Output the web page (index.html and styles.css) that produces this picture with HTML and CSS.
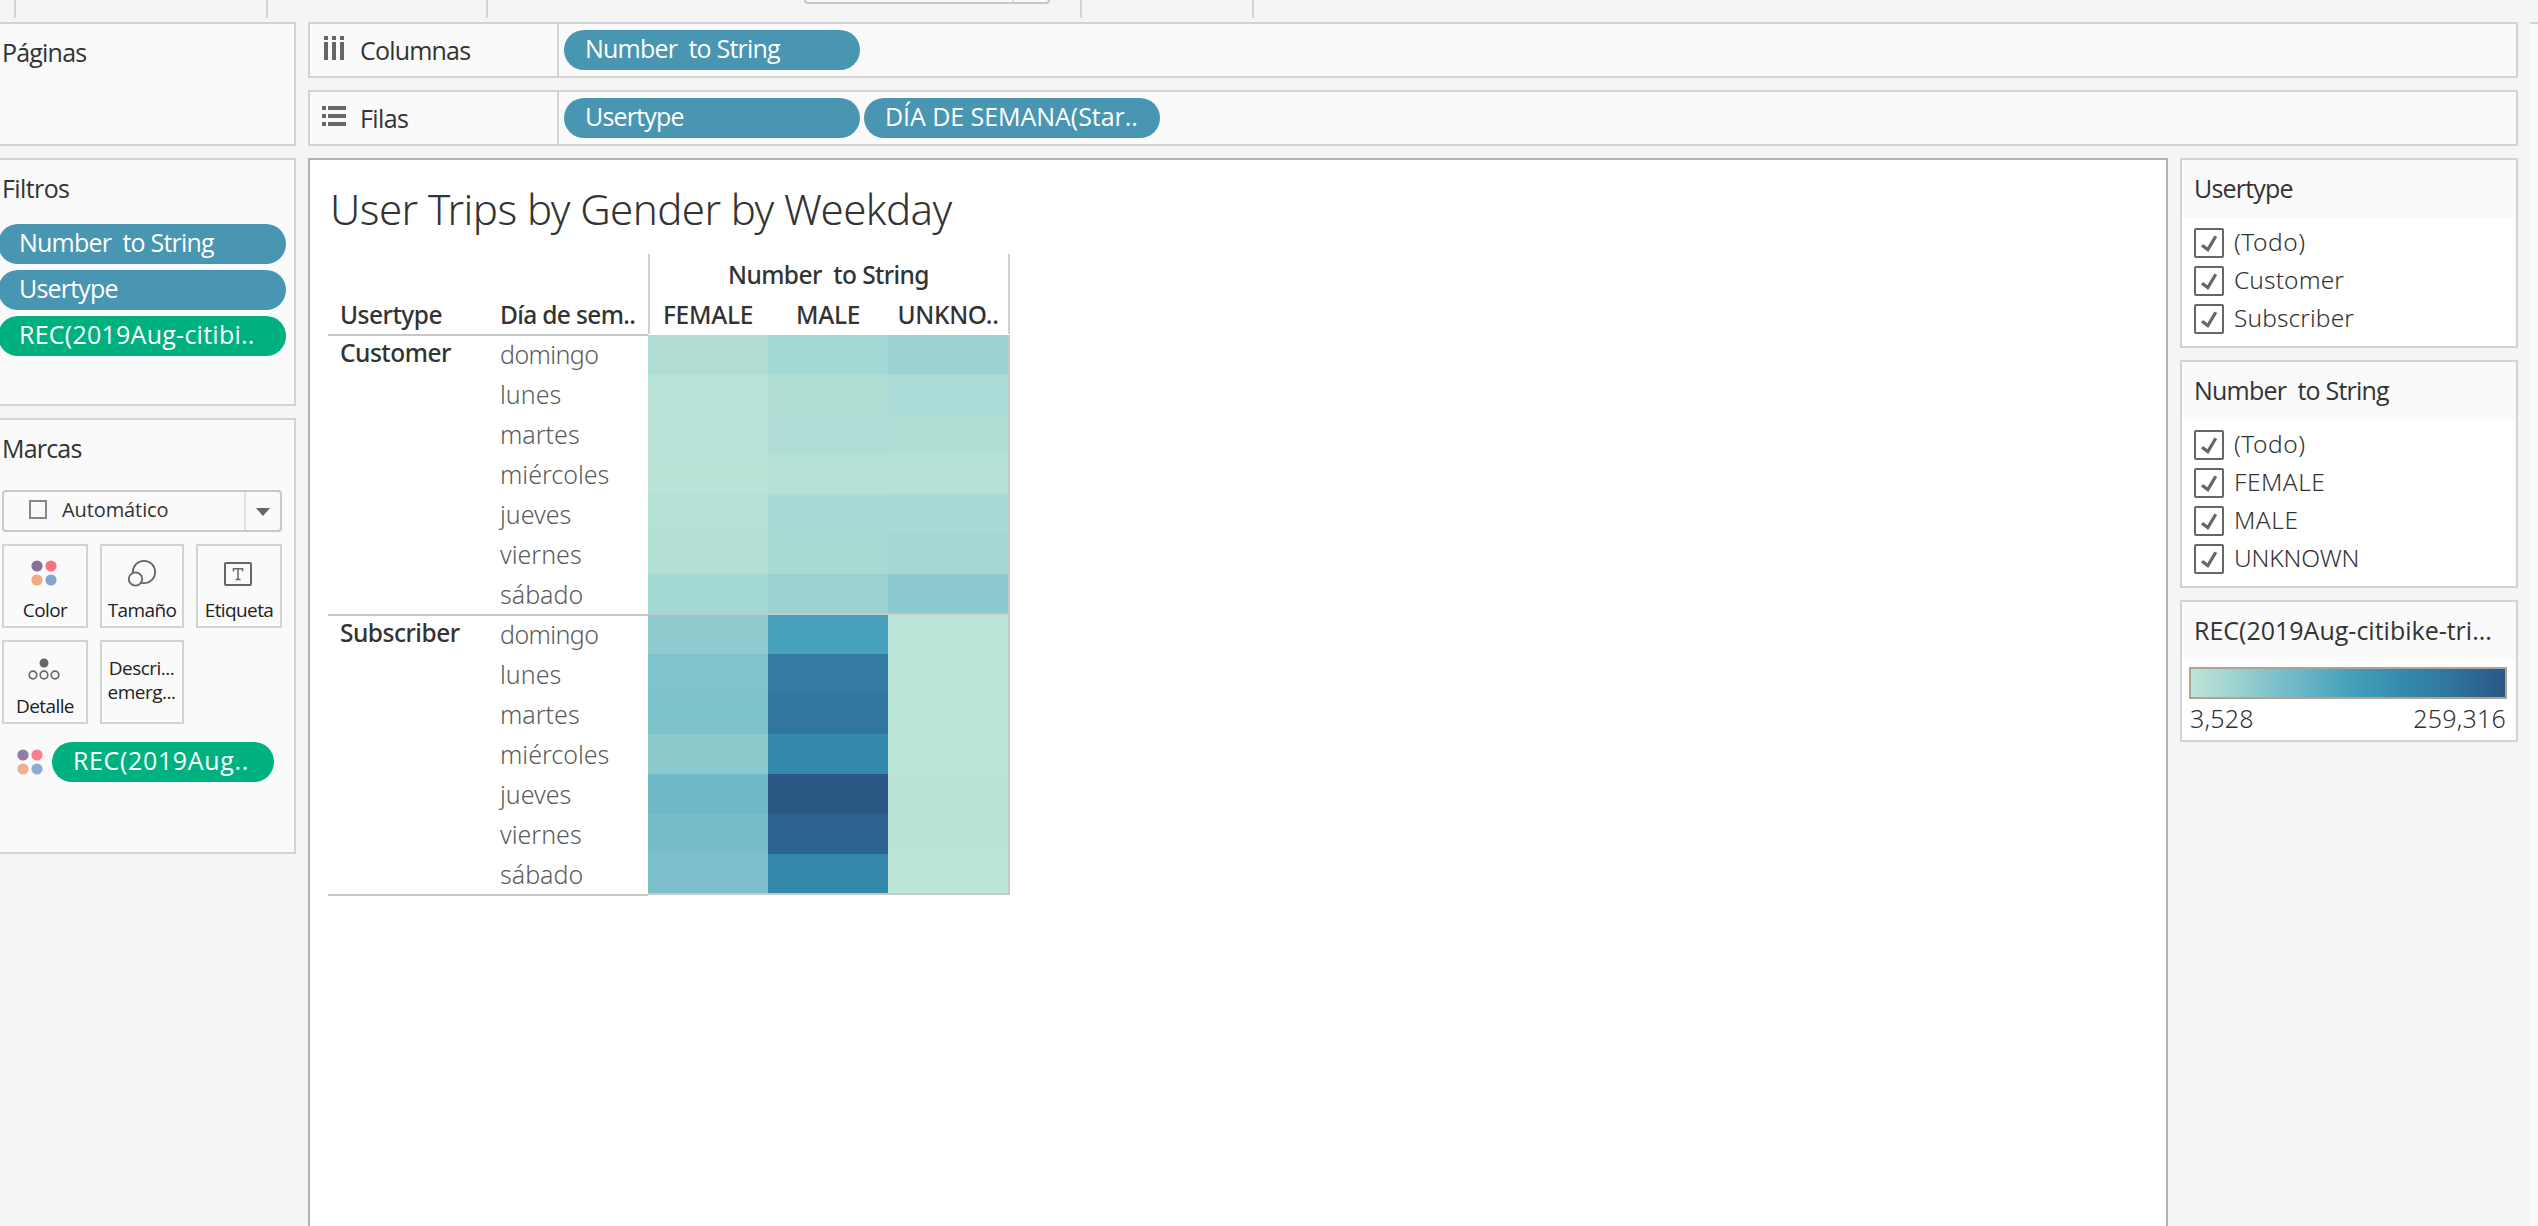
FILE: index.html
```html
<!DOCTYPE html>
<html lang="es">
<head>
<meta charset="utf-8">
<title>User Trips by Gender by Weekday</title>
<link rel="stylesheet" href="styles.css">
</head>
<body>
<svg class="defs" width="0" height="0">
  <symbol id="dots" viewBox="0 0 26 26">
    <circle cx="6" cy="6" r="5.6" fill="#876f99"/><circle cx="20" cy="6" r="5.6" fill="#fa7282"/>
    <circle cx="6" cy="20" r="5.6" fill="#f3a77d"/><circle cx="20" cy="20" r="5.6" fill="#82a5cc"/>
  </symbol>
  <symbol id="check" viewBox="0 0 30 30">
    <rect x="1" y="1" width="28" height="28" rx="1" fill="#fff" stroke="#666" stroke-width="2"/>
    <path d="M8 17.2L13.8 21.6L21.8 8.2" fill="none" stroke="#666" stroke-width="3.2"/>
  </symbol>
</svg>

<div class="toolbar">
  <i class="sep s1"></i><i class="sep s2"></i><i class="sep s3"></i>
  <div class="fit"><i></i></div>
  <i class="sep s4"></i><i class="sep s5"></i>
</div>

<div class="workspace">
  <aside class="side">
    <section class="panel pages"><h2 class="t7">Páginas</h2></section>
    <section class="panel filters">
      <h2 class="t5">Filtros</h2>
      <div class="pills">
        <div class="pill t8">Number&nbsp; to String</div>
        <div class="pill t8">Usertype</div>
        <div class="pill green w2">REC(2019Aug-citibi..</div>
      </div>
    </section>
    <section class="panel marks">
      <h2 class="t7">Marcas</h2>
      <div class="select"><i class="square"></i><span>Automático</span>
        <b><svg width="14" height="8"><path d="M0 0H14L7 8Z" fill="#666"/></svg></b></div>
      <div class="buttons">
        <div class="btn"><svg class="ic-color" width="26" height="26"><use href="#dots"/></svg><span>Color</span></div>
        <div class="btn"><svg class="ic-size" width="30" height="30" fill="none" stroke="#666" stroke-width="1.8"><circle cx="17" cy="13" r="11.2"/><circle cx="8.5" cy="20" r="6.7" fill="#fafafa"/></svg><span>Tamaño</span></div>
        <div class="btn"><svg class="ic-label" width="28" height="24"><rect x="1" y="1" width="26" height="22" rx="1" fill="none" stroke="#666" stroke-width="2"/><path d="M9.5 9.5V6.8H18.5V9.5M14 6.8V17.3M11.5 17.5H16.5" fill="none" stroke="#666" stroke-width="1.5"/></svg><span>Etiqueta</span></div>
        <div class="btn"><svg class="ic-detail" width="32" height="22" fill="none" stroke="#666" stroke-width="1.7"><circle cx="16" cy="5" r="4.5" fill="#666" stroke="none"/><circle cx="5" cy="17" r="3.8"/><circle cx="16" cy="17" r="3.8"/><circle cx="27" cy="17" r="3.8"/></svg><span>Detalle</span></div>
        <div class="btn tip"><span>Descri...</span><span>emerg...</span></div>
      </div>
      <div class="encoding"><svg width="26" height="26"><use href="#dots"/></svg><div class="pill green w3">REC(2019Aug..</div></div>
    </section>
  </aside>

  <main class="center">
    <div class="shelf">
      <div class="label"><svg width="24" height="24" fill="#666"><path d="M2 0h4v4H2zM10 0h4v4h-4zM18 0h4v4h-4zM2 6h4v18H2zM10 6h4v18h-4zM18 6h4v18h-4z"/></svg><span class="t8">Columnas</span></div>
      <div class="pill t8">Number&nbsp; to String</div>
    </div>
    <div class="shelf rows">
      <div class="label"><svg width="24" height="20" fill="#666"><path d="M0 0h4v4H0zM0 8h4v4H0zM0 16h4v4H0zM6 0h18v4H6zM6 8h18v4H6zM6 16h18v4H6z"/></svg><span class="t5">Filas</span></div>
      <div class="pill t8">Usertype</div>
      <div class="pill w1">DÍA DE SEMANA(Star..</div>
    </div>
    <div class="view">
      <section class="sheet">
        <h1>User Trips by Gender by Weekday</h1>
        <div class="table">
          <div class="corner"><b>Usertype</b><b>Día de sem..</b></div>
          <div class="head">
            <b class="field">Number&nbsp; to String</b>
            <div class="cols"><b>FEMALE</b><b>MALE</b><b>UNKNO..</b></div>
          </div>
          <div class="group"><b>Customer</b>
            <ul><li class="dg">domingo</li><li>lunes</li><li>martes</li><li>miércoles</li><li>jueves</li><li>viernes</li><li>sábado</li></ul></div>
          <div class="cells">
            <i style="background:#b0dcd3"></i><i style="background:#a5d9d5"></i><i style="background:#9bd3d2"></i>
            <i style="background:#b8e2d7"></i><i style="background:#aeddd4"></i><i style="background:#abdcd7"></i>
            <i style="background:#b9e3d8"></i><i style="background:#afddd5"></i><i style="background:#b0ddd4"></i>
            <i style="background:#bae4d8"></i><i style="background:#b5e0d6"></i><i style="background:#b6e1d7"></i>
            <i style="background:#b5e0d5"></i><i style="background:#a9dbd6"></i><i style="background:#a8dad6"></i>
            <i style="background:#b4dfd5"></i><i style="background:#a9dbd5"></i><i style="background:#a5d8d4"></i>
            <i style="background:#a5d9d4"></i><i style="background:#9bd2d0"></i><i style="background:#8ccad0"></i>
          </div>
          <div class="group"><b>Subscriber</b>
            <ul><li class="dg">domingo</li><li>lunes</li><li>martes</li><li>miércoles</li><li>jueves</li><li>viernes</li><li>sábado</li></ul></div>
          <div class="cells">
            <i style="background:#8fcacf"></i><i style="background:#46a2bc"></i><i style="background:#bce5d9"></i>
            <i style="background:#81c3cd"></i><i style="background:#337ba1"></i><i style="background:#bbe5d9"></i>
            <i style="background:#7ec2cc"></i><i style="background:#31769e"></i><i style="background:#bbe5d8"></i>
            <i style="background:#8ccacd"></i><i style="background:#348aac"></i><i style="background:#bce5d9"></i>
            <i style="background:#6eb8c8"></i><i style="background:#2b5884"></i><i style="background:#b9e3d7"></i>
            <i style="background:#77bcc8"></i><i style="background:#2d648f"></i><i style="background:#bae4d8"></i>
            <i style="background:#7dc0cb"></i><i style="background:#3489ab"></i><i style="background:#bbe5d8"></i>
          </div>
        </div>
      </section>
      <aside class="cards">
        <section class="card">
          <h2 class="t8">Usertype</h2>
          <div class="opts">
            <label><svg><use href="#check"/></svg><span class="all">(Todo)</span></label>
            <label><svg><use href="#check"/></svg><span>Customer</span></label>
            <label><svg><use href="#check"/></svg><span>Subscriber</span></label>
          </div>
        </section>
        <section class="card">
          <h2 class="t8">Number&nbsp; to String</h2>
          <div class="opts">
            <label><svg><use href="#check"/></svg><span class="all">(Todo)</span></label>
            <label><svg><use href="#check"/></svg><span class="all">FEMALE</span></label>
            <label><svg><use href="#check"/></svg><span class="all">MALE</span></label>
            <label><svg><use href="#check"/></svg><span class="caps">UNKNOWN</span></label>
          </div>
        </section>
        <section class="card">
          <h2>REC(2019Aug-citibike-tri...</h2>
          <div class="legend"><div class="ramp"></div><div class="range"><span>3,528</span><span>259,316</span></div></div>
        </section>
      </aside>
    </div>
  </main>
  <div class="edge"></div>
</div>
</body>
</html>
```

FILE: styles.css
```css
* { box-sizing: border-box; margin: 0; padding: 0; }
body { width: 2538px; height: 1226px; overflow: hidden; background: #f5f5f5; color: #333; font: 25px "Open Sans", sans-serif; display: flex; flex-direction: column; white-space: nowrap; }
h1, h2 { font-weight: 400; font-size: 25px; }
svg { display: block; flex: none; }
.defs { position: absolute; }

.t5 { letter-spacing: -.6px; }
.t7 { letter-spacing: -.8px; }
.t8 { letter-spacing: -.8px; }
.w1 { letter-spacing: -.05px; }
.w2 { letter-spacing: .25px; }
.w3 { letter-spacing: .65px; }

.toolbar { height: 22px; display: flex; flex: none; align-items: flex-start; }
.sep { width: 2px; height: 18px; background: #d3d3d3; }
.s1 { margin-left: 14px; }
.s2 { margin-left: 250px; }
.s3 { margin-left: 218px; }
.fit { margin-left: 316px; width: 246px; height: 4px; border: 2px solid #c8c8c8; border-top: 0; border-radius: 0 0 4px 4px; background: #fafafa; display: flex; justify-content: flex-end; }
.fit i { width: 2px; height: 2px; margin-right: 34px; background: #e0e0e0; }
.s4 { margin-left: 30px; }
.s5 { margin-left: 170px; }

.workspace { flex: 1; display: flex; gap: 12px; min-height: 0; }
.side { width: 296px; display: flex; flex-direction: column; gap: 12px; }
.panel { border: 2px solid #d3d3d3; border-left: 0; background: #fafafa; padding-top: 8px; }
.panel h2 { line-height: 40px; padding-left: 2px; }
.pages { height: 124px; }
.filters { height: 248px; }
.marks { height: 436px; }
.pill { width: 296px; height: 40px; line-height: 37px; border-radius: 20px; background: #4996b2; color: #fff; padding-left: 21px; overflow: hidden; }
.green { background: #00b180; }
.pills { margin: 16px 0 0 -2px; display: flex; flex-direction: column; gap: 6px; }
.pills .pill { width: 288px; }

.select { margin: 22px 0 0 2px; width: 280px; height: 42px; border: 2px solid #c8c8c8; border-radius: 4px; display: flex; align-items: center; font-size: 20px; letter-spacing: -.1px; }
.square { width: 18px; height: 19px; border: 2px solid #888; margin: -4px 15px 0 25px; }
.select span { line-height: 36px; margin-top: -2px; }
.select b { margin-left: auto; width: 36px; height: 38px; border-left: 2px solid #e0e0e0; display: flex; align-items: center; justify-content: center; padding-top: 2px; }
.buttons { margin: 12px 0 0 2px; display: grid; grid-template-columns: 86px 84px 86px; column-gap: 12px; row-gap: 12px; }
.btn { height: 84px; border: 2px solid #d3d3d3; display: flex; flex-direction: column; align-items: center; justify-content: space-between; font-size: 19px; letter-spacing: -.6px; color: #222; }
.btn span { line-height: 24px; margin: 0 0 4px 0; }
.ic-color { margin: 14px 2px 0 0; }
.ic-size { margin: 13px 0 0 0; }
.ic-label { margin: 16px 2px 0 0; }
.ic-detail { margin: 16px 2px 0 0; }
.tip { justify-content: flex-start; padding-top: 14px; }
.btn.tip span { margin: 0 1px 0 0; letter-spacing: -.5px; }
.encoding { display: flex; align-items: center; gap: 9px; margin: 18px 0 0 17px; }
.encoding .pill { width: 222px; }
.encoding svg { opacity: .9; }

.center { width: 2210px; display: flex; flex-direction: column; gap: 12px; }
.shelf { height: 56px; border: 2px solid #d3d3d3; background: #fafafa; display: flex; align-items: center; gap: 4px; }
.label { width: 249px; height: 52px; border-right: 2px solid #d3d3d3; display: flex; align-items: center; padding-left: 12px; gap: 14px; margin-right: 1px; }
.label svg { margin-top: -4px; }
.label span { margin-top: -1px; }

.view { flex: 1; display: flex; gap: 12px; min-height: 0; }
.sheet { width: 1860px; border: 2px solid #b1b1b1; border-bottom: 0; background: #fff; font-family: "Noto Sans", sans-serif; }
.sheet h1 { font-size: 42px; font-weight: 300; letter-spacing: -.55px; line-height: 60px; padding-left: 20px; margin-top: 19px; }
.table { margin: 15px 0 0 18px; width: 682px; display: grid; grid-template-columns: 320px 362px; grid-template-rows: 82px 280px 280px; }
.table b { font-weight: 500; font-size: 24.5px; letter-spacing: -.5px; }
.corner { display: grid; grid-template-columns: 160px 160px; align-items: end; border-bottom: 2px solid #c8c8c8; padding-left: 12px; }
.corner b { line-height: 34px; padding-bottom: 2px; }
.corner b + b { letter-spacing: -.65px; }
.head { height: 80px; border: 2px solid #d0d0d0; border-top: 0; border-bottom: 0; display: flex; flex-direction: column; }
.head .field { line-height: 40px; height: 44px; padding: 1px 1px 0 0; text-align: center; letter-spacing: -.6px; }
.cols { display: grid; grid-template-columns: repeat(3, 120px); text-align: center; margin-left: -2px; }
.cols b { line-height: 34px; letter-spacing: -.3px; }
.group { border-bottom: 2px solid #c8c8c8; display: grid; grid-template-columns: 160px 1fr; padding-left: 12px; height: 280px; }
.group b { line-height: 34px; }
.group ul { list-style: none; font-weight: 300; color: #5c5c5c; margin-top: -1px; }
.group li { height: 40px; line-height: 38px; }
.dg { letter-spacing: -.6px; }
.cells { display: grid; grid-template-columns: 120px 120px 120px; grid-template-rows: 39px repeat(5, 40px) 39px; width: 362px; height: 280px; margin-top: -1px; border: solid #c8c8c8; border-width: 0 2px 2px 0; }

.cards { width: 338px; display: flex; flex-direction: column; gap: 12px; }
.card { border: 2px solid #d3d3d3; background: #fff; }
.card h2 { height: 58px; line-height: 56px; background: #fafafa; padding-left: 12px; }
.opts { padding: 10px 0 12px 12px; display: flex; flex-direction: column; gap: 8px; font-family: "Noto Sans", sans-serif; font-weight: 300; font-size: 24.5px; }
.opts label { display: flex; align-items: center; gap: 10px; height: 30px; line-height: 30px; letter-spacing: .1px; }
.opts span { margin-top: -2px; }
.opts svg { width: 30px; height: 30px; }
.opts .all { letter-spacing: .5px; }
.opts .caps { letter-spacing: -.15px; }
.legend { height: 80px; padding: 7px 9px 0 7px; }
.ramp { width: 318px; height: 32px; border: 2px solid #b0a392; background: linear-gradient(90deg, #bce5d9, #9fd4d1 13%, #7dc0cb 27%, #46a2bc 50%, #3489ab 68%, #31769e 82%, #2d648f 92%, #2b5884); }
.range { display: flex; justify-content: space-between; line-height: 38px; padding: 0 1px; font-family: "Noto Sans", sans-serif; font-weight: 300; letter-spacing: .2px; }
.edge { width: 8px; border-top: 2px solid #d3d3d3; background: #fafafa; }
```
